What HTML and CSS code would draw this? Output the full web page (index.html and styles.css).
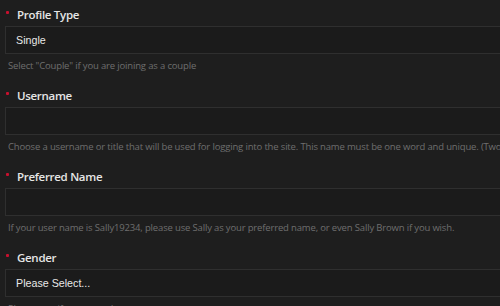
FILE: index.html
```html
<!DOCTYPE html>
<html>
<head>
<meta charset="utf-8">
<link rel="stylesheet" href="styles.css">
</head>
<body>
<form class="form">
  <div class="field">
    <label class="label"><span class="req"></span>Profile Type</label>
    <div class="input">Single</div>
    <p class="help">Select "Couple" if you are joining as a couple</p>
  </div>
  <div class="field">
    <label class="label"><span class="req"></span>Username</label>
    <div class="input"></div>
    <p class="help">Choose a username or title that will be used for logging into the site. This name must be one word and unique. (Two words will be joined.)</p>
  </div>
  <div class="field">
    <label class="label"><span class="req"></span>Preferred Name</label>
    <div class="input"></div>
    <p class="help">If your user name is Sally19234, please use Sally as your preferred name, or even Sally Brown if you wish.</p>
  </div>
  <div class="field">
    <label class="label"><span class="req"></span>Gender</label>
    <div class="input">Please Select...</div>
    <p class="help">Please specify your gender</p>
  </div>
</form>
</body>
</html>
```
FILE: styles.css
```css
html, body {
  margin: 0;
  padding: 0;
  background: #1e1e1e;
  overflow: hidden;
  width: 500px;
  height: 306px;
}
.form {
  display: flex;
  flex-direction: column;
  padding: 5px 0 0 5px;
}
.field {
  display: flex;
  flex-direction: column;
  height: 81px;
}
.label {
  display: flex;
  align-items: center;
  height: 19px;
  font-family: "Open Sans", sans-serif;
  font-weight: 600;
  font-size: 11.5px;
  letter-spacing: -0.3px;
  color: #e6e6e6;
}
.req {
  width: 3px;
  height: 3px;
  background: #c8102e;
  border-radius: 1px;
  margin: 0 8px 5px 1px;
}
.input {
  margin-top: 2px;
  width: 520px;
  height: 26px;
  border: 1px solid #2f2f2f;
  background: #1b1b1b;
  display: flex;
  align-items: center;
  padding-left: 10px;
  box-sizing: content-box;
  font-family: "Liberation Sans", Arial, sans-serif;
  font-size: 10.7px;
  color: #e8e8e8;
}
.help {
  margin: 5px 0 0 3px;
  font-family: "Open Sans", sans-serif;
  font-size: 9.5px;
  letter-spacing: -0.16px;
  color: #6e6e6e;
  white-space: nowrap;
}
```
